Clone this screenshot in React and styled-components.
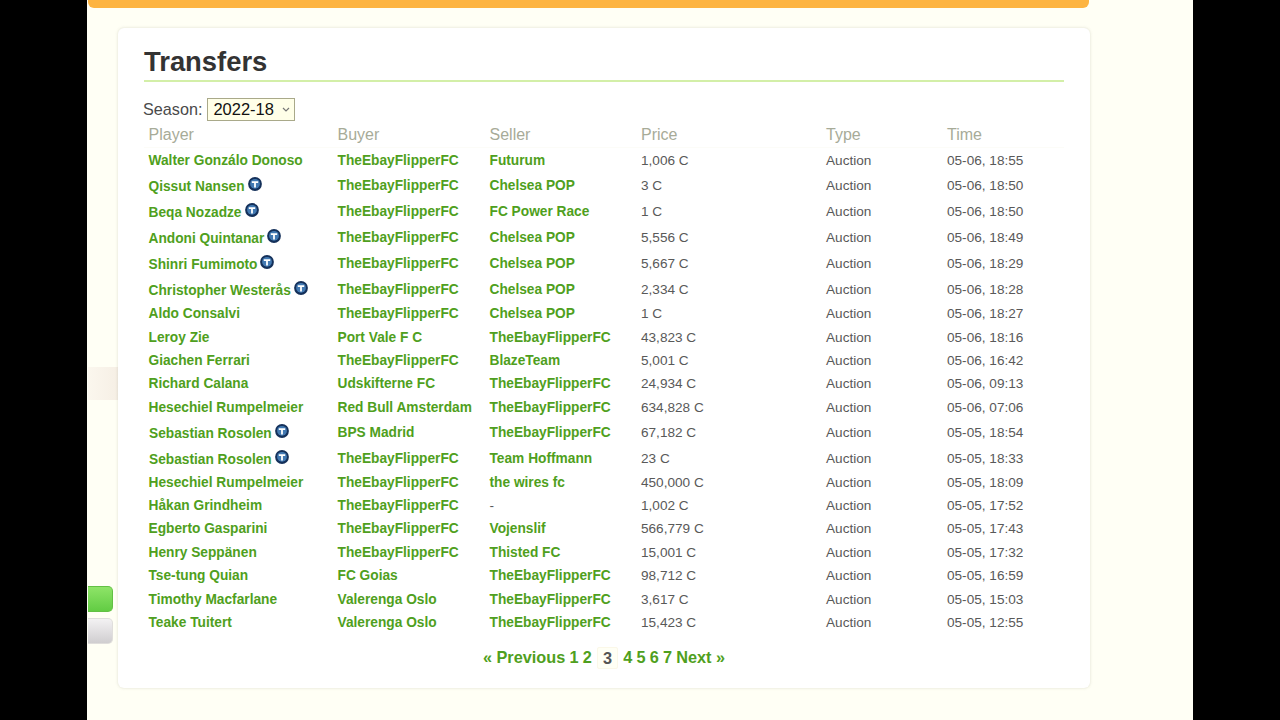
import React from "react";
import styled, { createGlobalStyle } from "styled-components";

const Global = createGlobalStyle`
  html, body { margin: 0; padding: 0; background: #000; overflow: hidden; }
  body { font-family: "Liberation Sans", Arial, sans-serif; }
`;

const Screen = styled.div`
  width: 1280px;
  height: 720px;
  display: flex;
  justify-content: center;
  background: #000;
  overflow: hidden;
`;
const Page = styled.div`
  width: 1106px;
  height: 720px;
  background: #fffff5;
  border-left: 1px solid #fffff5;
  box-sizing: border-box;
`;
const TopBar = styled.div`
  width: 1001px;
  height: 8px;
  background: #fdb441;
  border-radius: 0 0 6px 6px;
`;
const Body = styled.div`
  display: flex;
  margin-top: 20px;
`;
const Rail = styled.div`
  width: 30px;
  display: flex;
  flex-direction: column;
  align-items: flex-start;
`;
const RailGlow = styled.div`
  width: 30px;
  height: 33px;
  margin-top: 339px;
  background: linear-gradient(90deg, #fbf7ee, #f6efe5);
`;
const RailTab = styled.div`
  width: 25px;
  height: 26px;
  margin-top: ${(p) => p.$gap}px;
  border-radius: 0 5px 5px 0;
  box-sizing: border-box;
  border: 1px solid ${(p) => (p.$green ? "#62c044" : "#e0dedc")};
  border-left: 0;
  background: ${(p) =>
    p.$green
      ? "linear-gradient(#8ee468, #62cc44)"
      : "linear-gradient(#f3f2f3, #d0ced0)"};
`;
const Card = styled.section`
  width: 972px;
  height: 660px;
  box-sizing: border-box;
  padding: 0 26px;
  background: #fff;
  border-radius: 6px;
  box-shadow: 0 0 3px rgba(120, 120, 90, 0.25);
`;
const Title = styled.h1`
  margin: 0;
  height: 54px;
  padding-top: 17px;
  box-sizing: border-box;
  font-size: 27.4px;
  line-height: 34px;
  font-weight: 700;
  color: #333;
  border-bottom: 2px solid #d3efa8;
`;
const SeasonRow = styled.div`
  display: flex;
  align-items: center;
  height: 22px;
  margin-top: 16px;
  margin-left: -1px;
  gap: 5px;
  font-size: 16.2px;
  color: #4a4a4a;
`;
const chevron =
  "url(\"data:image/svg+xml,%3Csvg xmlns='http://www.w3.org/2000/svg' width='8' height='5'%3E%3Cpath d='M1 1l3 3 3-3' fill='none' stroke='%23777' stroke-width='1.2'/%3E%3C/svg%3E\")";
const SeasonSelect = styled.select`
  appearance: none;
  width: 88px;
  height: 23px;
  padding: 0 0 0 5px;
  font-family: inherit;
  font-size: 16.5px;
  color: #111;
  background: #ffffe8 ${chevron} no-repeat right 4px center;
  border: 1px solid #a9a98a;
  border-radius: 0;
`;
const columns = "189px 152px 151.5px 185px 121px 1fr";
const HeadRow = styled.div`
  display: grid;
  grid-template-columns: ${columns};
  padding-left: 4.5px;
  height: 28px;
  padding-top: 2px;
  align-items: center;
  font-size: 16px;
  color: #a7ab98;
  border-bottom: 1px solid #fcfcf8;
  box-sizing: border-box;
`;
const Row = styled.div`
  display: grid;
  grid-template-columns: ${columns};
  padding-left: 4.5px;
  height: ${(p) => p.$h}px;
  align-items: center;
  font-size: 13.6px;
  color: #595959;
`;
const Linked = styled.a`
  font-weight: 700;
  font-size: 13.72px;
  color: #4f9f20;
  text-decoration: none;
  white-space: nowrap;
`;
const PlayerCell = styled.div`
  display: flex;
  align-items: flex-start;
  gap: 3px;
  padding-top: ${(p) => (p.$transfer ? 2 : 0)}px;
  padding-left: ${(p) => (p.$shift ? 0.5 : 0)}px;
`;
const BadgeIcon = styled.svg`
  width: 14px;
  height: 14px;
  margin-top: -2px;
  flex: none;
`;
const Plain = styled.span`
  white-space: nowrap;
`;
const Pager = styled.nav`
  display: flex;
  justify-content: center;
  align-items: center;
  gap: 4.2px;
  height: 26px;
  margin-top: 10px;
  font-size: 16.3px;
  font-weight: 700;
`;
const PagerLink = styled.a`
  color: #4f9f20;
  text-decoration: none;
`;
const PagerCurrent = styled.span`
  padding: 1px 5px 0;
  margin: 1px 1px 0;
  color: #555;
  background: #fffff5;
  border: 1px solid #fbf8e8;
  border-radius: 2px;
`;

const Badge = () => (
  <BadgeIcon viewBox="0 0 14 14" aria-hidden="true">
    <circle cx="7" cy="7" r="6.9" fill="#14305a" />
    <circle cx="7" cy="6.8" r="4.9" fill="#4279b2" />
    <path d="M3.8 4.2h6.4v1.7H7.9v4.6H6.1V5.9H3.8z" fill="#fff" />
  </BadgeIcon>
);

const E = "TheEbayFlipperFC";
const C = "Chelsea POP";
const rows = [
  ["Walter Gonzálo Donoso", E, "Futurum", "1,006 C", "05-06, 18:55", 24.5],
  ["Qissut Nansen", E, C, "3 C", "05-06, 18:50", 25.5, true],
  ["Beqa Nozadze", E, "FC Power Race", "1 C", "05-06, 18:50", 26, true],
  ["Andoni Quintanar", E, C, "5,556 C", "05-06, 18:49", 26, true],
  ["Shinri Fumimoto", E, C, "5,667 C", "05-06, 18:29", 26, true],
  ["Christopher Westerås", E, C, "2,334 C", "05-06, 18:28", 26, true],
  ["Aldo Consalvi", E, C, "1 C", "05-06, 18:27", 23.5],
  ["Leroy Zie", "Port Vale F C", E, "43,823 C", "05-06, 18:16", 23.5],
  ["Giachen Ferrari", E, "BlazeTeam", "5,001 C", "05-06, 16:42", 22.5],
  ["Richard Calana", "Udskifterne FC", E, "24,934 C", "05-06, 09:13", 23.5],
  ["Hesechiel Rumpelmeier", "Red Bull Amsterdam", E, "634,828 C", "05-06, 07:06", 25],
  ["Sebastian Rosolen", "BPS Madrid", E, "67,182 C", "05-05, 18:54", 25.5, true, true],
  ["Sebastian Rosolen", E, "Team Hoffmann", "23 C", "05-05, 18:33", 25, true, true],
  ["Hesechiel Rumpelmeier", E, "the wires fc", "450,000 C", "05-05, 18:09", 23],
  ["Håkan Grindheim", E, "-", "1,002 C", "05-05, 17:52", 23.5],
  ["Egberto Gasparini", E, "Vojenslif", "566,779 C", "05-05, 17:43", 23.5],
  ["Henry Seppänen", E, "Thisted FC", "15,001 C", "05-05, 17:32", 23.5],
  ["Tse-tung Quian", "FC Goias", E, "98,712 C", "05-05, 16:59", 23.5],
  ["Timothy Macfarlane", "Valerenga Oslo", E, "3,617 C", "05-05, 15:03", 23.5],
  ["Teake Tuitert", "Valerenga Oslo", E, "15,423 C", "05-05, 12:55", 23.5],
];

const Team = ({ name }) =>
  name === "-" ? <Plain>-</Plain> : <Linked href="#">{name}</Linked>;

export default function App() {
  return (
    <Screen>
      <Global />
      <Page>
        <TopBar />
        <Body>
          <Rail>
            <RailGlow />
            <RailTab $green $gap={186} />
            <RailTab $gap={6} />
          </Rail>
          <Card>
            <Title>Transfers</Title>
            <SeasonRow>
              Season:
              <SeasonSelect defaultValue="2022-18">
                <option>2022-18</option>
              </SeasonSelect>
            </SeasonRow>
            <HeadRow>
              <span>Player</span>
              <span>Buyer</span>
              <span>Seller</span>
              <span>Price</span>
              <span>Type</span>
              <span>Time</span>
            </HeadRow>
            {rows.map(([player, buyer, seller, price, time, h, transfer, shift], i) => (
              <Row key={i} $h={h}>
                <PlayerCell $transfer={transfer} $shift={shift}>
                  <Linked href="#">{player}</Linked>
                  {transfer && <Badge />}
                </PlayerCell>
                <Team name={buyer} />
                <Team name={seller} />
                <Plain>{price}</Plain>
                <Plain>Auction</Plain>
                <Plain>{time}</Plain>
              </Row>
            ))}
            <Pager>
              <PagerLink href="#">« Previous</PagerLink>
              <PagerLink href="#">1</PagerLink>
              <PagerLink href="#">2</PagerLink>
              <PagerCurrent>3</PagerCurrent>
              <PagerLink href="#">4</PagerLink>
              <PagerLink href="#">5</PagerLink>
              <PagerLink href="#">6</PagerLink>
              <PagerLink href="#">7</PagerLink>
              <PagerLink href="#">Next »</PagerLink>
            </Pager>
          </Card>
        </Body>
      </Page>
    </Screen>
  );
}
